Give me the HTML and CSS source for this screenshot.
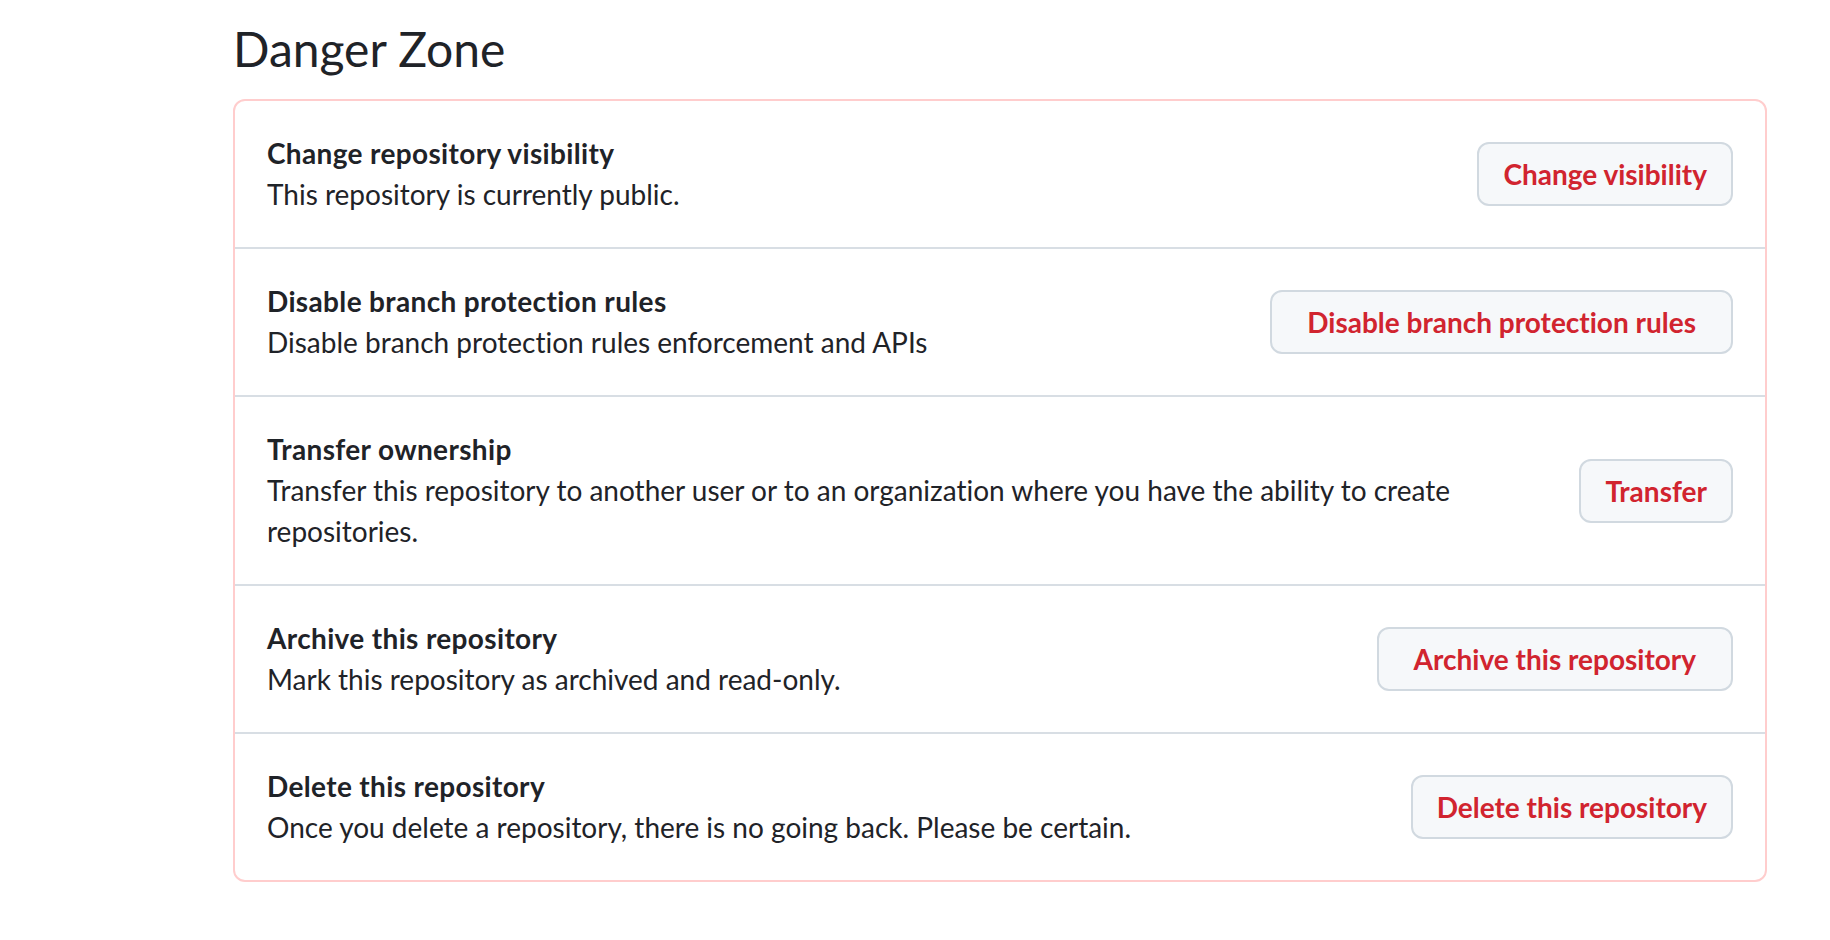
FILE: index.html
```html
<!DOCTYPE html>
<html lang="en">
<head>
<meta charset="utf-8">
<title>Danger Zone</title>
<link rel="stylesheet" href="styles.css">
</head>
<body>
<main class="settings">
  <h2 class="subhead-heading">Danger Zone</h2>
  <div class="danger-box">
    <div class="danger-row">
      <div class="row-text">
        <strong class="row-title">Change repository visibility</strong>
        <p class="row-desc">This repository is currently public.</p>
      </div>
      <button class="btn-danger" type="button">Change visibility</button>
    </div>
    <div class="danger-row">
      <div class="row-text">
        <strong class="row-title">Disable branch protection rules</strong>
        <p class="row-desc">Disable branch protection rules enforcement and APIs</p>
      </div>
      <button class="btn-danger btn-wide" type="button">Disable branch protection rules</button>
    </div>
    <div class="danger-row">
      <div class="row-text">
        <strong class="row-title">Transfer ownership</strong>
        <p class="row-desc">Transfer this repository to another user or to an organization where you have the ability to create repositories.</p>
      </div>
      <button class="btn-danger" type="button">Transfer</button>
    </div>
    <div class="danger-row">
      <div class="row-text">
        <strong class="row-title">Archive this repository</strong>
        <p class="row-desc">Mark this repository as archived and read-only.</p>
      </div>
      <button class="btn-danger btn-wide" type="button">Archive this repository</button>
    </div>
    <div class="danger-row">
      <div class="row-text">
        <strong class="row-title">Delete this repository</strong>
        <p class="row-desc">Once you delete a repository, there is no going back. Please be certain.</p>
      </div>
      <button class="btn-danger" type="button">Delete this repository</button>
    </div>
  </div>
</main>
</body>
</html>
```
FILE: styles.css
```css
html, body {
  margin: 0;
  padding: 0;
  background: #ffffff;
}

body {
  font-family: "Lato", "Roboto", "Liberation Sans", sans-serif;
  font-variant-ligatures: none;
  color: #1f2328;
  font-size: 28px;
  line-height: 41px;
}

.settings {
  width: 1534px;
  padding: 13px 0 0 233px;
}

.subhead-heading {
  margin: 0;
  padding-bottom: 14px;
  font-size: 48px;
  line-height: 72px;
  font-weight: 400;
  color: #1f2328;
}

.danger-box {
  border: 2px solid #ffcdcd;
  border-radius: 12px;
  background: #ffffff;
}

.danger-row {
  display: flex;
  align-items: center;
  gap: 32px;
  padding: 32px;
}

.danger-row + .danger-row {
  border-top: 2px solid #d8dee4;
}

.row-text {
  flex: 1 1 auto;
  min-width: 0;
}

.row-title {
  display: block;
  font-weight: 700;
  letter-spacing: 0.35px;
}

.row-desc {
  margin: 0;
}

.btn-danger {
  flex-shrink: 0;
  box-sizing: border-box;
  height: 64px;
  padding: 0 24px;
  border: 2px solid #d1d9e0;
  border-radius: 12px;
  background: #f6f8fa;
  color: #d1242f;
  font-family: inherit;
  font-variant-ligatures: none;
  font-size: 28px;
  font-weight: 700;
  line-height: 40px;
  white-space: nowrap;
  cursor: pointer;
}

.btn-wide {
  padding: 0 35px;
}
```
